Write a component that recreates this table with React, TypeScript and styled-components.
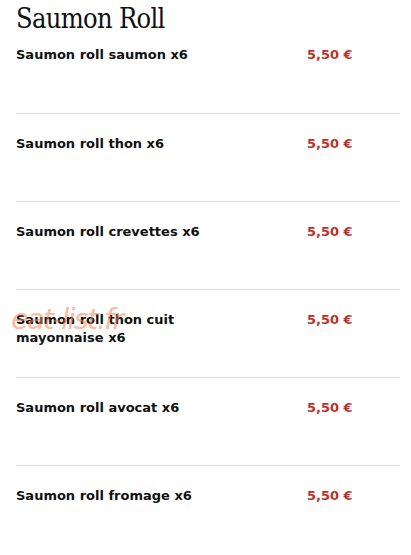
import React from "react";
import styled, { createGlobalStyle } from "styled-components";

const Global = createGlobalStyle`
  html, body { margin: 0; padding: 0; background: #fff; }
  body { font-family: "DejaVu Sans", Verdana, sans-serif; }
`;

const Page = styled.div`
  position: relative;
  padding: 0 11px 0 16px;
  width: 411px;
  box-sizing: border-box;
`;

const Title = styled.h1`
  margin: 0;
  padding-top: 3px;
  height: 31px;
  font-family: "DejaVu Serif", "Liberation Serif", serif;
  font-stretch: condensed;
  font-weight: normal;
  font-size: 27px;
  line-height: 31px;
  color: #111;
  letter-spacing: -0.7px;
`;

const List = styled.div`
  display: flex;
  flex-direction: column;
`;

const Row = styled.div<{ $first?: boolean; $last?: boolean }>`
  display: grid;
  grid-template-columns: 225px 1fr;
  column-gap: 66px;
  align-items: start;
  box-sizing: border-box;
  height: ${(p) => (p.$first ? 80 : 88)}px;
  padding-top: ${(p) => (p.$first ? 12 : 21)}px;
  border-bottom: ${(p) => (p.$last ? "none" : "1px solid #dcdcdc")};
`;

const Name = styled.div`
  font-family: "DejaVu Sans", Verdana, sans-serif;
  font-weight: bold;
  font-size: 13px;
  line-height: 18px;
  color: #111;
`;

const Price = styled.div`
  font-family: "DejaVu Sans", Verdana, sans-serif;
  font-weight: bold;
  font-size: 13px;
  line-height: 18px;
  color: #c0302a;
`;

const Watermark = styled.div`
  position: absolute;
  left: 11px;
  top: 302px;
  font-family: "DejaVu Sans", sans-serif;
  font-style: italic;
  font-size: 29px;
  color: rgba(240, 130, 80, 0.55);
  pointer-events: none;
  letter-spacing: -1.8px;
`;

const items = [
  "Saumon roll saumon x6",
  "Saumon roll thon x6",
  "Saumon roll crevettes x6",
  "Saumon roll thon cuit mayonnaise x6",
  "Saumon roll avocat x6",
  "Saumon roll fromage x6",
];

export default function App() {
  return (
    <>
      <Global />
      <Page>
        <Title>Saumon Roll</Title>
        <List>
          {items.map((name, i) => (
            <Row key={name} $first={i === 0} $last={i === items.length - 1}>
              <Name>{name}</Name>
              <Price>5,50 €</Price>
            </Row>
          ))}
        </List>
        <Watermark>eat-list.fr</Watermark>
      </Page>
    </>
  );
}
